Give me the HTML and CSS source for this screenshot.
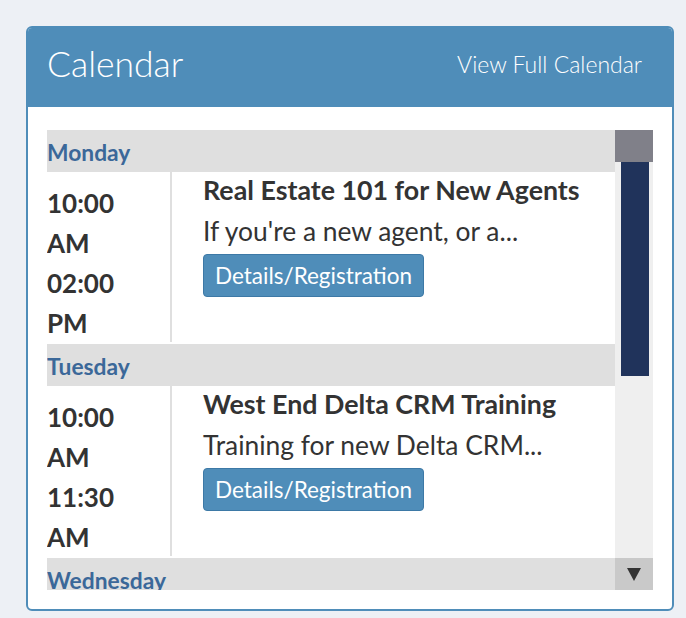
FILE: index.html
```html
<!DOCTYPE html>
<html>
<head>
<meta charset="utf-8">
<link rel="stylesheet" href="styles.css">
</head>
<body>
<div class="card">
  <div class="card-header">
    <h2 class="title">Calendar</h2>
    <a class="full-link">View Full Calendar</a>
  </div>
  <div class="card-body">
    <div class="scroller">
      <div class="list">
        <div class="day">Monday</div>
        <div class="event">
          <div class="times">
            <span>10:00</span><span>AM</span><span>02:00</span><span>PM</span>
          </div>
          <div class="detail">
            <div class="ev-title">Real Estate 101 for New Agents</div>
            <div class="ev-desc">If you're a new agent, or a...</div>
            <a class="btn">Details/Registration</a>
          </div>
        </div>
        <div class="day">Tuesday</div>
        <div class="event">
          <div class="times">
            <span>10:00</span><span>AM</span><span>11:30</span><span>AM</span>
          </div>
          <div class="detail">
            <div class="ev-title">West End Delta CRM Training</div>
            <div class="ev-desc">Training for new Delta CRM...</div>
            <a class="btn">Details/Registration</a>
          </div>
        </div>
        <div class="day">Wednesday</div>
      </div>
      <div class="scrollbar">
        <div class="sb-up"></div>
        <div class="sb-thumb"></div>
        <div class="sb-fill"></div>
        <div class="sb-down">
          <svg width="14" height="13" viewBox="0 0 14 13"><polygon points="0,0 14,0 7,13" fill="#333"/></svg>
        </div>
      </div>
    </div>
  </div>
</div>
</body>
</html>
```
FILE: styles.css
```css
* { box-sizing: border-box; }
html, body { margin: 0; }
body {
  background: #edf0f5;
  padding: 26px 12px 0 26px;
  font-family: Lato, "Open Sans", sans-serif;
  color: #333;
}
.card {
  width: 648px;
  height: 585px;
  border: 2px solid #4f8db9;
  border-radius: 6px;
  background: #fff;
  overflow: hidden;
  display: flex;
  flex-direction: column;
}
.card-header {
  background: #4f8db9;
  height: 79px;
  flex: none;
  display: flex;
  justify-content: space-between;
  align-items: center;
  padding: 0 30px 6px 19px;
  color: #fff;
}
.title {
  margin: 0;
  font-size: 35.5px;
  font-weight: 300;
  line-height: 1.2;
}
.full-link {
  font-size: 23px;
  font-weight: 300;
  line-height: 1.2;
}
.card-body {
  flex: 1;
  padding: 23px 19px 19px 19px;
}
.scroller {
  display: flex;
  height: 460px;
}
.list {
  flex: 1;
  overflow: hidden;
}
.day {
  background: #dfdfdf;
  color: #3b6899;
  font-weight: 700;
  font-size: 22.8px;
  height: 42px;
  line-height: 40px;
  padding-top: 2px;
}
.event {
  display: flex;
  height: 170px;
  margin-bottom: 2px;
}
.times {
  width: 125px;
  border-right: 2px solid #dfdfdf;
  padding-top: 11px;
  display: flex;
  flex-direction: column;
  font-weight: 700;
  font-size: 26px;
  line-height: 40px;
}
.detail {
  padding: 3px 0 0 31px;
  display: flex;
  flex-direction: column;
  align-items: flex-start;
}
.ev-title {
  font-weight: 700;
  font-size: 26.8px;
  line-height: 30px;
}
.ev-desc {
  font-size: 26.4px;
  line-height: 36px;
  margin-top: 8px;
}
.btn {
  margin-top: 5px;
  height: 43px;
  line-height: 41px;
  padding: 0 11px;
  background: #4f8db9;
  border: 1px solid #3d79a6;
  border-radius: 4px;
  color: #fff;
  font-size: 22.5px;
}
.scrollbar {
  width: 38px;
  background: #efefef;
  display: flex;
  flex-direction: column;
}
.sb-up { height: 32px; background: #808089; }
.sb-thumb { height: 214px; margin: 0 4px 0 6px; background: #20335b; }
.sb-fill { flex: 1; }
.sb-down {
  height: 32px;
  background: #c9c9c9;
  display: flex;
  justify-content: center;
  align-items: center;
}
.sb-down svg { display: block; }
```
